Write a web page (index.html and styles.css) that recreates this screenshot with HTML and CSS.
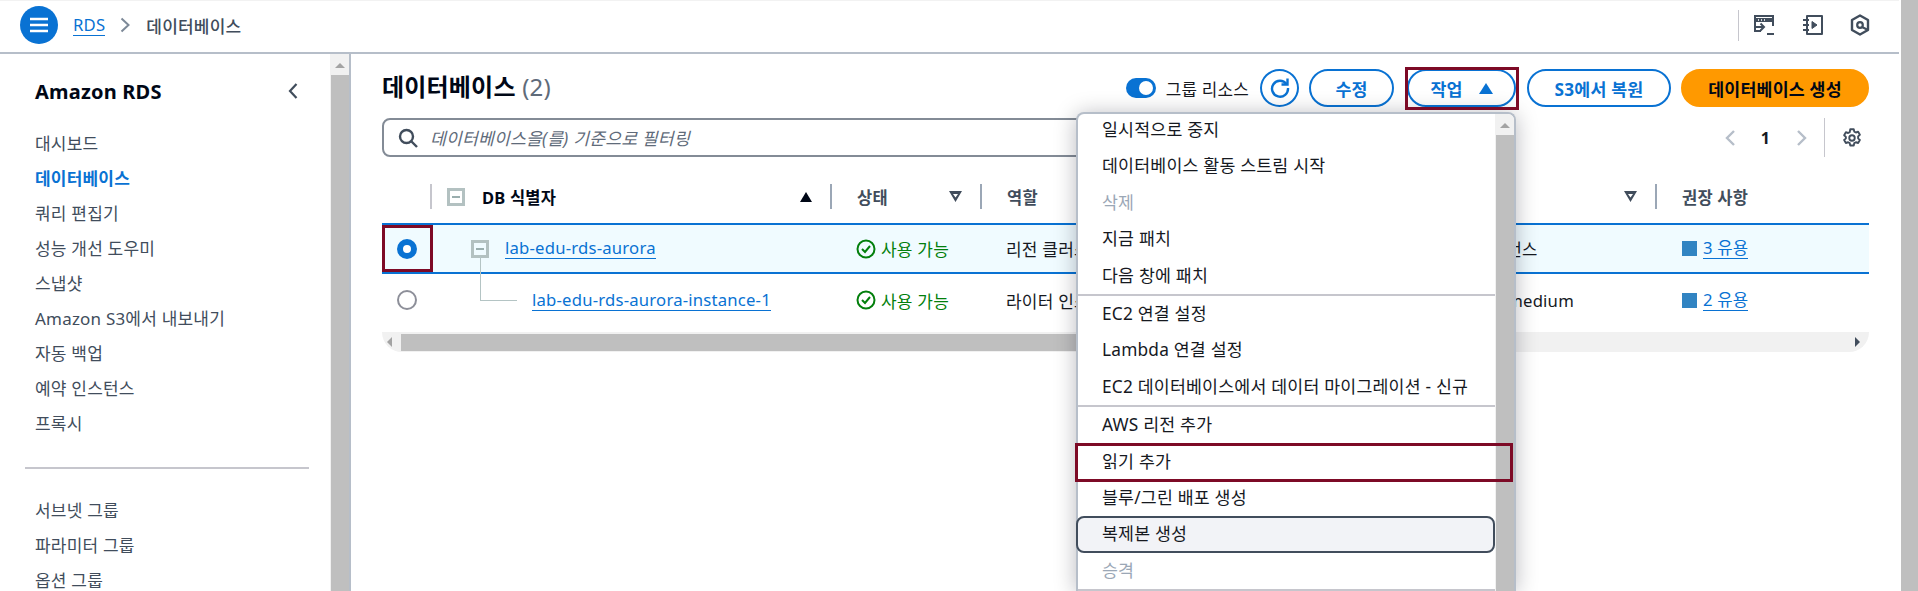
FILE: index.html
```html
<!DOCTYPE html>
<html lang="ko">

<head>
    <meta charset="utf-8">
    <title>데이터베이스 - RDS</title>
    <link rel="stylesheet" href="styles.css">
</head>

<body>
    <div class="app">
        <header class="topbar">
            <button class="menu-btn" type="button" aria-label="menu">
                <svg width="18" height="16" viewBox="0 0 18 16"><path d="M0 2h18M0 8h18M0 14h18" stroke="#fff" stroke-width="2.4"/></svg>
            </button>
            <a class="crumb-link" href="#">RDS</a>
            <svg class="crumb-sep" width="10" height="16" viewBox="0 0 10 16"><path d="M1.5 1.5 8.5 8l-7 6.5" fill="none" stroke="#7d8998" stroke-width="2"/></svg>
            <span class="crumb-here">데이터베이스</span>
            <div class="top-icons">
                <svg class="shell-icon" width="22" height="22" viewBox="0 0 22 22" fill="none" stroke="#414d5c" stroke-width="2"><path d="M8 17H2V2h18v10"/><path d="M2 6h18" stroke-width="4"/><path d="M5 6h1M8 6h1M11 6h1" stroke="#fff" stroke-width="1.4"/><path d="M3 13h7M7.500 9.500l3.500 3.500-3.500 3.500"/><path d="M14 20h7"/></svg>
                <svg width="22" height="22" viewBox="0 0 22 22" fill="none" stroke="#414d5c" stroke-width="2"><path d="M5 2h15v18H5z" stroke-linejoin="round"/><path d="M1 6h6M1 11h6M1 16h6"/><path d="M10 7.500v7l5-3.500z" fill="#414d5c" stroke-width="1"/></svg>
                <svg width="20" height="22" viewBox="0 0 20 22" fill="none" stroke="#414d5c" stroke-width="2.400"><path d="M10 1.500 18 6v10l-8 4.500L2 16V6z" stroke-linejoin="round"/><circle cx="10" cy="11" r="2.800" stroke-width="2.200"/><path d="M12 13l5 2.500" stroke-width="2"/></svg>
            </div>
        </header>

        <div class="body-row">
            <nav class="sidebar">
                <div class="side-head">
                    <h2>Amazon RDS</h2>
                    <svg width="12" height="18" viewBox="0 0 12 18"><path d="M9.500 2 3 9l6.500 7" fill="none" stroke="#414d5c" stroke-width="2.200"/></svg>
                </div>
                <ul class="side-list">
                    <li>대시보드</li>
                    <li class="active">데이터베이스</li>
                    <li>쿼리 편집기</li>
                    <li>성능 개선 도우미</li>
                    <li>스냅샷</li>
                    <li>Amazon S3에서 내보내기</li>
                    <li>자동 백업</li>
                    <li>예약 인스턴스</li>
                    <li>프록시</li>
                </ul>
                <hr class="side-div">
                <ul class="side-list">
                    <li>서브넷 그룹</li>
                    <li>파라미터 그룹</li>
                    <li>옵션 그룹</li>
                </ul>
            </nav>
            <div class="side-scroll"><i class="arrow-up"></i><div class="side-thumb"></div></div>

            <main class="content">
                <div class="toolbar">
                    <h1>데이터베이스 <span class="count">(2)</span></h1>
                    <div class="actions">
                        <span class="toggle"></span>
                        <span class="toggle-label">그룹 리소스</span>
                        <button class="btn btn-round" type="button" aria-label="refresh">
                            <svg width="22" height="22" viewBox="0 0 22 22" fill="none" stroke="#0972d3" stroke-width="2.400"><path d="M17.500 7A8 8 0 1 0 19 11"/><path d="M12.500 7.500h6v-6"/></svg>
                        </button>
                        <button class="btn btn-edit" type="button">수정</button>
                        <div class="action-wrap">
                            <button class="btn btn-action" type="button">작업 <i class="tri-up"></i></button>
                            <div class="mark mark-action"></div>
                            <div class="dropdown">
                                <div class="drop-list">
                                    <div class="drop-group">
                                        <div class="drop-item">일시적으로 중지</div>
                                        <div class="drop-item">데이터베이스 활동 스트림 시작</div>
                                        <div class="drop-item off">삭제</div>
                                        <div class="drop-item">지금 패치</div>
                                        <div class="drop-item">다음 창에 패치</div>
                                    </div>
                                    <div class="drop-group">
                                        <div class="drop-item">EC2 연결 설정</div>
                                        <div class="drop-item">Lambda 연결 설정</div>
                                        <div class="drop-item">EC2 데이터베이스에서 데이터 마이그레이션 - 신규</div>
                                    </div>
                                    <div class="drop-group">
                                        <div class="drop-item">AWS 리전 추가</div>
                                        <div class="drop-item">읽기 추가<div class="mark mark-read"></div></div>
                                        <div class="drop-item">블루/그린 배포 생성</div>
                                        <div class="drop-item hover">복제본 생성</div>
                                        <div class="drop-item off">승격</div>
                                    </div>
                                </div>
                                <div class="drop-scroll"><i class="arrow-up"></i><div class="side-thumb"></div></div>
                            </div>
                        </div>
                        <button class="btn btn-s3" type="button">S3에서 복원</button>
                        <button class="btn btn-create" type="button">데이터베이스 생성</button>
                    </div>
                </div>

                <div class="filter-row">
                    <div class="search">
                        <svg width="20" height="20" viewBox="0 0 20 20" fill="none" stroke="#414d5c" stroke-width="2.400"><circle cx="8.500" cy="8.500" r="6.500"/><path d="M13 13l6 6"/></svg>
                        <span>데이터베이스을(를) 기준으로 필터링</span>
                    </div>
                    <div class="pager">
                        <svg width="12" height="18" viewBox="0 0 12 18"><path d="M10 2 3 9l7 7" fill="none" stroke="#b6bec9" stroke-width="2.400"/></svg>
                        <b>1</b>
                        <svg width="12" height="18" viewBox="0 0 12 18"><path d="M2 2l7 7-7 7" fill="none" stroke="#b6bec9" stroke-width="2.400"/></svg>
                        <span class="pager-sep"></span>
                        <svg width="20" height="20" viewBox="0 0 16 16" fill="none" stroke="#414d5c" stroke-width="1.500" stroke-linejoin="round"><path d="M6.600 1h2.800l.4 1.900 1.300.7 1.800-.6 1.400 2.400-1.400 1.300v1.600l1.400 1.300-1.400 2.400-1.800-.6-1.300.7-.4 1.900H6.600l-.4-1.900-1.300-.7-1.800.6-1.400-2.400 1.400-1.300V7.100L1.700 5.800l1.400-2.400 1.800.6 1.300-.7z"/><circle cx="8" cy="8" r="2.200"/></svg>
                    </div>
                </div>

                <table class="db-table">
                    <colgroup>
                        <col class="c-radio"><col class="c-id"><col class="c-status"><col class="c-role"><col class="c-size"><col class="c-rec">
                    </colgroup>
                    <thead>
                        <tr>
                            <th></th>
                            <th><div class="th-in first"><span class="th-name"><i class="tree-box"></i>DB 식별자</span><i class="sort-up"></i></div></th>
                            <th><div class="th-in">상태<i class="sort-down"></i></div></th>
                            <th><div class="th-in">역할</div></th>
                            <th><div class="th-in end"><i class="sort-down"></i></div></th>
                            <th><div class="th-in">권장 사항</div></th>
                        </tr>
                    </thead>
                    <tbody>
                        <tr class="selected">
                            <td class="cell-radio"><span class="radio on"></span><div class="mark mark-radio"></div></td>
                            <td><div class="id-cell"><i class="tree-box"></i><a href="#">lab-edu-rds-aurora</a></div></td>
                            <td><span class="status"><svg width="20" height="20" viewBox="0 0 20 20" fill="none" stroke="#037f0c" stroke-width="2"><circle cx="10" cy="10" r="8.500"/><path d="M6 10l3 3 5-6"/></svg>사용 가능</span></td>
                            <td>리전 클러스터</td>
                            <td>2 인스턴스</td>
                            <td><span class="rec"><i></i><a href="#">3 유용</a></span></td>
                        </tr>
                        <tr>
                            <td class="cell-radio"><span class="radio"></span></td>
                            <td><div class="id-cell child"><a href="#">lab-edu-rds-aurora-instance-1</a></div></td>
                            <td><span class="status"><svg width="20" height="20" viewBox="0 0 20 20" fill="none" stroke="#037f0c" stroke-width="2"><circle cx="10" cy="10" r="8.500"/><path d="M6 10l3 3 5-6"/></svg>사용 가능</span></td>
                            <td>라이터 인스턴스</td>
                            <td>db.t3.medium</td>
                            <td><span class="rec"><i></i><a href="#">2 유용</a></span></td>
                        </tr>
                    </tbody>
                </table>

                <div class="h-scroll">
                    <i class="arrow-left"></i>
                    <div class="h-thumb"></div>
                    <i class="arrow-right"></i>
                </div>
            </main>
        </div>
    </div>
    <div class="page-scroll"></div>
</body>

</html>
```

FILE: styles.css
```css
* {
    box-sizing: border-box;
}

html,
body {
    height: 591px;
    margin: 0;
    overflow: hidden;
}

body {
    display: flex;
    background: #fff;
    color: #16191f;
    font-family: "Noto Sans", "Noto Sans CJK KR", sans-serif;
    font-size: 17px;
    letter-spacing: 0.2px;
}

a {
    color: #0972d3;
    font-size: 16.7px;
    text-decoration: none;
    border-bottom: 1px solid #0972d3;
}

button {
    font-family: inherit;
    letter-spacing: inherit;
}

.app {
    width: 1899px;
    height: 591px;
    overflow: hidden;
    display: flex;
    flex-direction: column;
}

.page-scroll {
    width: 17px;
    margin-left: 2px;
    background: #bfbfbf;
}

/* top bar */
.topbar {
    height: 54px;
    flex: none;
    display: flex;
    align-items: center;
    padding: 0 29px 3px 20px;
    border-top: 1px solid #f2f2f2;
    border-bottom: 2px solid #b6bec9;
}

.menu-btn {
    width: 38px;
    height: 38px;
    padding: 0;
    border: 0;
    border-radius: 50%;
    background: #0972d3;
    display: flex;
    align-items: center;
    justify-content: center;
}

.crumb-link {
    margin-left: 15px;
    line-height: 21px;
}

.crumb-sep {
    margin: 0 16px 0 15px;
}

.crumb-here {
    color: #414d5c;
    font-weight: 500;
    font-size: 17px;
}

.top-icons {
    margin-left: auto;
    display: flex;
    align-items: center;
    gap: 26px;
    height: 31px;
    padding-left: 14px;
    border-left: 1px solid #c6c6cd;
}

.shell-icon {
    margin-right: 1px;
}

/* left navigation */
.body-row {
    flex: 1;
    display: flex;
    min-height: 0;
}

.sidebar {
    width: 330px;
    flex: none;
    overflow: hidden;
    padding: 0 21px 0 25px;
}

.side-head {
    display: flex;
    align-items: center;
    justify-content: space-between;
    height: 26px;
    margin-top: 24px;
    padding: 0 10px;
}

.side-head h2 {
    margin: 0;
    font-size: 20px;
    font-weight: 700;
    color: #000716;
}

.side-list {
    list-style: none;
    margin: 0;
    padding: 0 0 0 10px;
}

.side-head + .side-list {
    margin-top: 22px;
}

.side-list li {
    height: 35px;
    line-height: 35px;
    color: #414d5c;
    white-space: nowrap;
}

.side-list li.active {
    color: #0972d3;
    font-weight: 700;
}

.side-div {
    height: 2px;
    margin: 26px 0 24px;
    border: 0;
    background: #c6c6cd;
}

.side-scroll {
    width: 21px;
    flex: none;
    display: flex;
    flex-direction: column;
    align-items: center;
    background: #f1f1f1;
    border-right: 2px solid #b6bec9;
}

.side-thumb {
    flex: 1;
    width: 18px;
    background: #bfbfbf;
}

.arrow-up {
    width: 0;
    height: 0;
    margin: 9px 0 7px;
    border: 5px solid transparent;
    border-top: 0;
    border-bottom: 5px solid #a3a3a3;
}

/* main */
.content {
    flex: 1;
    min-width: 0;
    padding: 15px 30px 0 31px;
}

.toolbar {
    display: flex;
    align-items: center;
    justify-content: space-between;
    height: 38px;
}

.toolbar h1 {
    margin: -5px 0 0;
    font-size: 24px;
    font-weight: 700;
    color: #000716;
}

.count {
    font-weight: 400;
    color: #5f6b7a;
}

.actions {
    display: flex;
    align-items: center;
}

.toggle {
    position: relative;
    width: 30px;
    height: 20px;
    border-radius: 10px;
    background: #0972d3;
}

.toggle::after {
    content: "";
    position: absolute;
    top: 3px;
    right: 3px;
    width: 14px;
    height: 14px;
    border-radius: 50%;
    background: #fff;
}

.toggle-label {
    margin: 0 11px 0 10px;
    font-size: 16.9px;
}

.btn {
    height: 38px;
    padding: 0;
    border: 2px solid #0972d3;
    border-radius: 19px;
    background: #fff;
    color: #0972d3;
    font-size: 17.3px;
    font-weight: 700;
    display: flex;
    align-items: center;
    justify-content: center;
}

.btn-round {
    width: 39px;
    border-radius: 50%;
}

.btn-edit {
    width: 85px;
    margin-left: 10px;
}

.action-wrap {
    position: relative;
    margin: 0 11px 0 13px;
}

.btn-action {
    width: 109px;
    gap: 16px;
}

.tri-up {
    width: 0;
    height: 0;
    border: 7px solid transparent;
    border-top: 0;
    border-bottom: 11px solid #0972d3;
}

.btn-s3 {
    width: 144px;
}

.btn-create {
    width: 188px;
    margin-left: 10px;
    border-color: #ff9900;
    background: #ff9900;
    color: #000716;
}

/* red highlight frames */
.mark {
    position: absolute;
    border: 3px solid #7d0a26;
    pointer-events: none;
    z-index: 5;
}

.mark-action {
    inset: -2px -3px -3px -2px;
}

.mark-read {
    top: -1px;
    bottom: -2px;
    left: -3px;
    right: -18px;
}

.mark-radio {
    inset: 0 -3px 0 0;
}

/* actions dropdown */
.dropdown {
    position: absolute;
    top: 43px;
    right: 0;
    width: 440px;
    height: 479px;
    display: flex;
    background: #fff;
    border: 2px solid #b6bec9;
    border-bottom: 0;
    border-radius: 8px 8px 0 0;
    box-shadow: 0 2px 22px rgba(0, 7, 22, 0.28);
    z-index: 3;
}

.drop-list {
    flex: 1;
    min-width: 0;
    margin-top: -2px;
}

.drop-group {
    border-bottom: 2px solid #c6c6cd;
}

.drop-item {
    position: relative;
    height: 36.4px;
    line-height: 36px;
    padding-left: 24px;
    font-size: 17.3px;
    color: #16191f;
    white-space: nowrap;
}

.drop-item.off {
    color: #9ba7b6;
}

.drop-item.hover {
    margin-left: -2px;
    padding-left: 24px;
    background: #f2f3f7;
    border: 2px solid #414d5c;
    border-radius: 8px;
    line-height: 32px;
}

.drop-scroll {
    width: 19px;
    flex: none;
    display: flex;
    flex-direction: column;
    align-items: center;
    overflow: hidden;
    border-radius: 0 6px 0 0;
    background: #f1f1f1;
}

/* filter row */
.filter-row {
    display: flex;
    align-items: center;
    justify-content: space-between;
    height: 39px;
    margin-top: 11px;
}

.search {
    width: 1120px;
    height: 39px;
    display: flex;
    align-items: center;
    gap: 12px;
    padding-left: 14px;
    border: 2px solid #838b96;
    border-radius: 8px;
    color: #5f6b7a;
    font-style: italic;
    font-size: 17.2px;
}

.pager {
    display: flex;
    align-items: center;
    padding-right: 7px;
    height: 39px;
}

.pager b {
    margin: 0 26px 0 25px;
    font-size: 16px;
    color: #16191f;
}

.pager-sep {
    width: 1px;
    height: 39px;
    margin: 0 17px 0 16px;
    background: #c6c6cd;
}

/* table */
.db-table {
    width: 1487px;
    margin-top: 13px;
    table-layout: fixed;
    border-collapse: separate;
    border-spacing: 0;
}

.c-radio {
    width: 48px;
}

.c-id {
    width: 400px;
}

.c-status {
    width: 150px;
}

.c-role {
    width: 460px;
}

.c-size {
    width: 215px;
}

.c-rec {
    width: 214px;
}

.db-table th {
    height: 53px;
    padding: 0;
    text-align: left;
    font-size: 16.5px;
    font-weight: 700;
    color: #414d5c;
}

.th-in {
    display: flex;
    align-items: center;
    justify-content: space-between;
    height: 25px;
    padding: 0 18px 0 25px;
    border-left: 2px solid #9ba7b6;
}

.th-in.first {
    padding-left: 15px;
    border-left-color: #c6c6cd;
    color: #000716;
}

.th-in.end {
    justify-content: flex-end;
}

.th-name {
    display: flex;
    align-items: center;
    gap: 17px;
}

.sort-up {
    width: 0;
    height: 0;
    border: 6px solid transparent;
    border-top: 0;
    border-bottom: 10px solid #000716;
}

.sort-down {
    width: 13px;
    height: 11px;
    background: #414d5c;
    clip-path: polygon(0 0, 100% 0, 50% 100%, 0 0, 4px 3px, 50% 6.5px, 9px 3px, 4px 3px);
}

.db-table td {
    height: 52px;
    padding: 0 0 0 27px;
    white-space: nowrap;
    overflow: hidden;
    color: #16191f;
}

.db-table td:nth-child(2) {
    overflow: visible;
    padding-left: 27px;
}

.db-table td:nth-child(3) {
    padding-left: 27px;
}

.db-table td:nth-child(4) {
    padding-left: 26px;
}

.db-table td:nth-child(5) {
    padding-left: 21px;
    overflow: visible;
    font-size: 16.7px;
}

.selected td {
    height: 51px;
    background: #f0fbff;
    border-top: 2px solid #0972d3;
    border-bottom: 2px solid #0972d3;
}

.db-table .cell-radio {
    position: relative;
    padding: 0 0 0 15px;
    overflow: visible;
}

.radio {
    display: block;
    width: 20px;
    height: 20px;
    border-radius: 50%;
    border: 2.5px solid #8d8f99;
    background: #fff;
}

.radio.on {
    border: 6px solid #0972d3;
}

.tree-box {
    position: relative;
    flex: none;
    width: 18px;
    height: 18px;
    border: 3px solid #b3c1c1;
}

.tree-box::after {
    content: "";
    position: absolute;
    left: 2px;
    right: 2px;
    top: 5px;
    height: 2px;
    background: #9aaeae;
}

.id-cell {
    display: flex;
    align-items: center;
    gap: 16px;
    margin-left: 14px;
}

.id-cell a {
    line-height: 20px;
}

.id-cell.child {
    position: relative;
    margin-left: 75px;
}

.id-cell.child::before {
    content: "";
    position: absolute;
    left: -52px;
    bottom: 10px;
    width: 36px;
    height: 44px;
    border-left: 1px solid #b4c4c4;
    border-bottom: 1px solid #b4c4c4;
}

.status {
    display: flex;
    align-items: center;
    gap: 5px;
    margin-left: -1px;
    color: #037f0c;
}

.rec {
    display: flex;
    align-items: center;
    gap: 6px;
}

.rec i {
    width: 15px;
    height: 15px;
    background: #3184c2;
}

.rec a {
    line-height: 20px;
}

/* bottom scrollbar of the table */
.h-scroll {
    display: flex;
    align-items: center;
    width: 1487px;
    height: 20px;
    margin-top: 6px;
    padding-right: 5px;
    background: #f1f1f1;
    border-radius: 0 0 20px 20px;
}

.h-thumb {
    width: 1000px;
    height: 17px;
    margin-left: 9px;
    background: #bfbfbf;
}

.arrow-left,
.arrow-right {
    width: 0;
    height: 0;
    border: 5px solid transparent;
}

.arrow-left {
    margin-left: 5px;
    border-left: 0;
    border-right: 5px solid #a3a3a3;
}

.arrow-right {
    margin-left: auto;
    margin-right: 4px;
    border-right: 0;
    border-left: 5px solid #414d5c;
}
```
